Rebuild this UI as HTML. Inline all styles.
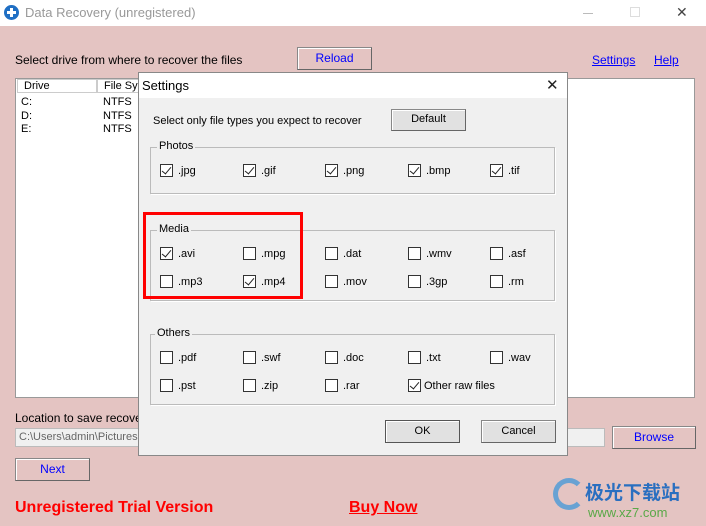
<html><head><style>
*{margin:0;padding:0;box-sizing:border-box}
body{width:706px;height:526px;position:relative;overflow:hidden;background:#e4c4c2;font-family:"Liberation Sans",Arial,sans-serif;font-size:12px;color:#000}
.a{position:absolute;white-space:nowrap}
.btn{position:absolute;border:1px solid #888;border-right-color:#666;border-bottom-color:#666;box-shadow:inset 1px 1px 0 #fff;background:#e1e1e1;text-align:center;font-size:12px}
.cb{position:absolute;width:13px;height:13px;border:1px solid #333;background:#fff}
.cb.c::after{content:"";position:absolute;left:3px;top:0px;width:4px;height:8px;border:solid #222;border-width:0 1.5px 1.5px 0;transform:rotate(40deg)}
.lb{position:absolute;font-size:11px}
.gb{position:absolute;border:1px solid #bbb;box-shadow:1px 1px 0 #fff}
.gt{position:absolute;background:#f0f0f0;padding:0 2px;font-size:11px}
</style></head><body>
<div class="a" style="left:0;top:0;width:706px;height:26px;background:#fff"></div>
<div class="a" style="left:4px;top:5px;width:15px;height:15px;border-radius:50%;background:#1f6fc4"></div>
<div class="a" style="left:7px;top:11px;width:9px;height:3px;background:#fff"></div>
<div class="a" style="left:10px;top:8px;width:3px;height:9px;background:#fff"></div>
<div class="a" style="left:25px;top:5px;font-size:13px;color:#999">Data Recovery (unregistered)</div>
<div class="a" style="left:583px;top:13px;width:10px;height:1px;background:#bbb"></div>
<div class="a" style="left:630px;top:7px;width:10px;height:10px;border:1px solid #ddd"></div>
<div class="a" style="left:676px;top:4px;font-size:14px;color:#444">✕</div>
<div class="a" style="left:15px;top:53px">Select drive from where to recover the files</div>
<div class="btn" style="left:297px;top:47px;width:75px;height:23px;line-height:20px;color:#00f;background:#e4c4c2">Reload</div>
<div class="a" style="left:592px;top:53px;color:#00f;text-decoration:underline">Settings</div>
<div class="a" style="left:654px;top:53px;color:#00f;text-decoration:underline">Help</div>
<div class="a" style="left:15px;top:78px;width:680px;height:320px;background:#fff;border:1px solid #999"></div>
<div class="a" style="left:17px;top:79px;width:80px;height:14px;border:1px solid #ccc;background:#fff;padding-left:6px;font-size:11px">Drive</div>
<div class="a" style="left:97px;top:79px;width:50px;height:14px;border:1px solid #ccc;background:#fff;padding-left:6px;font-size:11px">File Sys</div>
<div class="a" style="left:21px;top:96px;font-size:11px;line-height:13.5px">C:<br>D:<br>E:</div>
<div class="a" style="left:103px;top:96px;font-size:11px;line-height:13.5px">NTFS<br>NTFS<br>NTFS</div>
<div class="a" style="left:15px;top:411px">Location to save recove</div>
<div class="a" style="left:15px;top:428px;width:590px;height:19px;background:#f0f0f0;border:1px solid #bbb;font-size:11px;color:#666;padding:2px 3px">C:\Users\admin\Pictures</div>
<div class="btn" style="left:612px;top:426px;width:84px;height:23px;line-height:21px;color:#00f;background:#e4c4c2">Browse</div>
<div class="btn" style="left:15px;top:458px;width:75px;height:23px;line-height:21px;color:#00f;background:#e4c4c2">Next</div>
<div class="a" style="left:15px;top:499px;font-size:16px;font-weight:bold;color:#f00">Unregistered Trial Version</div>
<div class="a" style="left:349px;top:499px;font-size:16px;font-weight:bold;color:#f00;text-decoration:underline">Buy Now</div>
<div class="a" style="left:553px;top:478px;width:32px;height:32px;border-radius:50%;border:5px solid #4a9ad8;border-right-color:transparent;opacity:.8"></div>
<div class="a" style="left:585px;top:478px;font-size:19px;font-weight:bold;color:#2a6fc0;font-family:'Noto Sans CJK SC',sans-serif">极光下载站</div>
<div class="a" style="left:588px;top:505px;font-size:13px;color:#5aa848">www.xz7.com</div>
<!-- dialog -->
<div class="a" style="left:138px;top:72px;width:430px;height:384px;background:#f0f0f0;border:1px solid #888"></div>
<div class="a" style="left:139px;top:73px;width:428px;height:25px;background:#fff"></div>
<div class="a" style="left:142px;top:78px;font-size:13px">Settings</div>
<div class="a" style="left:546px;top:76px;font-size:15px;color:#222">✕</div>
<div class="a" style="left:153px;top:115px;font-size:11px">Select only file types you expect to recover</div>
<div class="btn" style="left:391px;top:109px;width:75px;height:22px;line-height:19px;font-size:11px">Default</div>
<div class="gb" style="left:150px;top:147px;width:405px;height:47px"></div><div class="gt" style="left:157px;top:140px">Photos</div>
<div class="gb" style="left:150px;top:230px;width:405px;height:71px"></div><div class="gt" style="left:157px;top:223px">Media</div>
<div class="gb" style="left:150px;top:334px;width:405px;height:71px"></div><div class="gt" style="left:155px;top:327px">Others</div>
<div class="a" style="left:143px;top:212px;width:160px;height:87px;border:3px solid #f00"></div>
<div class="cb c" style="left:160px;top:164px"></div><div class="lb" style="left:178px;top:165px">.jpg</div>
<div class="cb c" style="left:243px;top:164px"></div><div class="lb" style="left:261px;top:165px">.gif</div>
<div class="cb c" style="left:325px;top:164px"></div><div class="lb" style="left:343px;top:165px">.png</div>
<div class="cb c" style="left:408px;top:164px"></div><div class="lb" style="left:426px;top:165px">.bmp</div>
<div class="cb c" style="left:490px;top:164px"></div><div class="lb" style="left:508px;top:165px">.tif</div>
<div class="cb c" style="left:160px;top:247px"></div><div class="lb" style="left:178px;top:248px">.avi</div>
<div class="cb" style="left:243px;top:247px"></div><div class="lb" style="left:261px;top:248px">.mpg</div>
<div class="cb" style="left:325px;top:247px"></div><div class="lb" style="left:343px;top:248px">.dat</div>
<div class="cb" style="left:408px;top:247px"></div><div class="lb" style="left:426px;top:248px">.wmv</div>
<div class="cb" style="left:490px;top:247px"></div><div class="lb" style="left:508px;top:248px">.asf</div>
<div class="cb" style="left:160px;top:275px"></div><div class="lb" style="left:178px;top:276px">.mp3</div>
<div class="cb c" style="left:243px;top:275px"></div><div class="lb" style="left:261px;top:276px">.mp4</div>
<div class="cb" style="left:325px;top:275px"></div><div class="lb" style="left:343px;top:276px">.mov</div>
<div class="cb" style="left:408px;top:275px"></div><div class="lb" style="left:426px;top:276px">.3gp</div>
<div class="cb" style="left:490px;top:275px"></div><div class="lb" style="left:508px;top:276px">.rm</div>
<div class="cb" style="left:160px;top:351px"></div><div class="lb" style="left:178px;top:352px">.pdf</div>
<div class="cb" style="left:243px;top:351px"></div><div class="lb" style="left:261px;top:352px">.swf</div>
<div class="cb" style="left:325px;top:351px"></div><div class="lb" style="left:343px;top:352px">.doc</div>
<div class="cb" style="left:408px;top:351px"></div><div class="lb" style="left:426px;top:352px">.txt</div>
<div class="cb" style="left:490px;top:351px"></div><div class="lb" style="left:508px;top:352px">.wav</div>
<div class="cb" style="left:160px;top:379px"></div><div class="lb" style="left:178px;top:380px">.pst</div>
<div class="cb" style="left:243px;top:379px"></div><div class="lb" style="left:261px;top:380px">.zip</div>
<div class="cb" style="left:325px;top:379px"></div><div class="lb" style="left:343px;top:380px">.rar</div>
<div class="cb c" style="left:408px;top:379px"></div><div class="lb" style="left:424px;top:380px">Other raw files</div>
<div class="btn" style="left:385px;top:420px;width:75px;height:23px;line-height:20px;font-size:11px;border-color:#555">OK</div>
<div class="btn" style="left:481px;top:420px;width:75px;height:23px;line-height:20px;font-size:11px">Cancel</div>
</body></html>
